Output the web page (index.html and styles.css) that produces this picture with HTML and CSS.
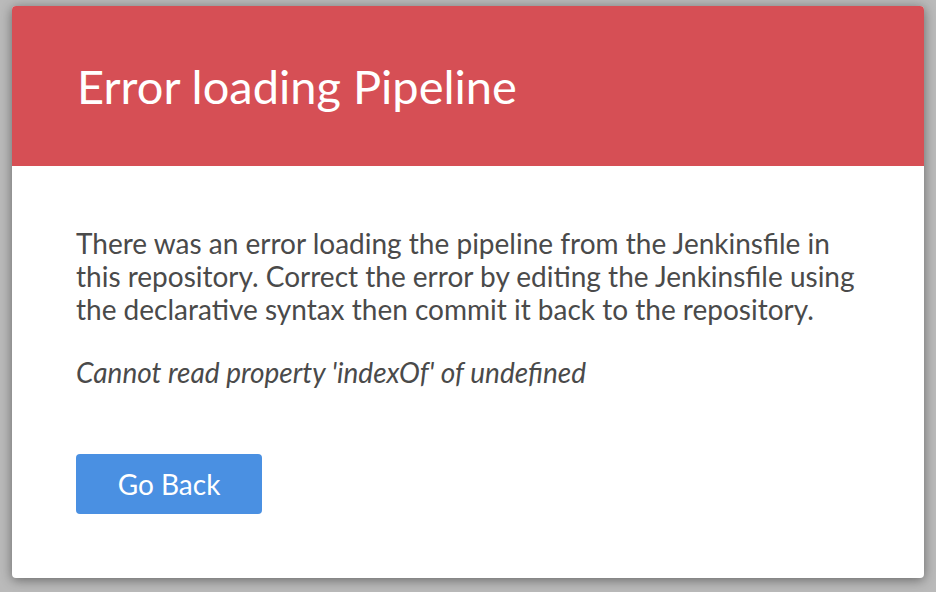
FILE: index.html
```html
<!DOCTYPE html>
<html>
<head>
<meta charset="utf-8">
<link rel="stylesheet" href="styles.css">
</head>
<body>
<div class="dialog">
  <div class="dialog-header">
    <h1 class="dialog-title">Error loading Pipeline</h1>
  </div>
  <div class="dialog-body">
    <p class="message">There was an error loading the pipeline from the Jenkinsfile in this repository. Correct the error by editing the Jenkinsfile using the declarative syntax then commit it back to the repository.</p>
    <p class="error-detail">Cannot read property 'indexOf' of undefined</p>
    <button class="btn-back">Go Back</button>
  </div>
</div>
</body>
</html>
```

FILE: styles.css
```css
html, body {
  margin: 0;
  padding: 0;
}
body {
  background: #bababa;
  width: 936px;
  height: 592px;
  padding: 6px 12px 14px 12px;
  box-sizing: border-box;
  font-family: Lato, "Open Sans", sans-serif;
}
.dialog {
  height: 572px;
  background: #fff;
  border-radius: 4px;
  box-shadow: 0 2px 12px rgba(0, 0, 0, 0.45);
  overflow: hidden;
  display: flex;
  flex-direction: column;
}
.dialog-header {
  background: #d64f55;
  height: 160px;
  box-sizing: border-box;
  padding: 0 64px 0 65px;
  display: flex;
  align-items: center;
}
.dialog-title {
  margin: 0;
  color: #fff;
  font-size: 47px;
  font-weight: 400;
  line-height: 56px;
}
.dialog-body {
  padding: 61px 64px 0 64px;
  color: #4a4a4a;
}
.message {
  margin: 0;
  font-size: 28px;
  line-height: 33px;
}
.error-detail {
  margin: 30px 0 0 0;
  font-size: 28px;
  line-height: 33px;
  font-style: italic;
}
.btn-back {
  margin-top: 65px;
  width: 186px;
  height: 60px;
  background: #4a90e2;
  border: none;
  border-radius: 4px;
  color: #fff;
  font-family: Lato, "Open Sans", sans-serif;
  font-size: 28px;
  padding: 0;
  cursor: pointer;
  display: block;
}
```
